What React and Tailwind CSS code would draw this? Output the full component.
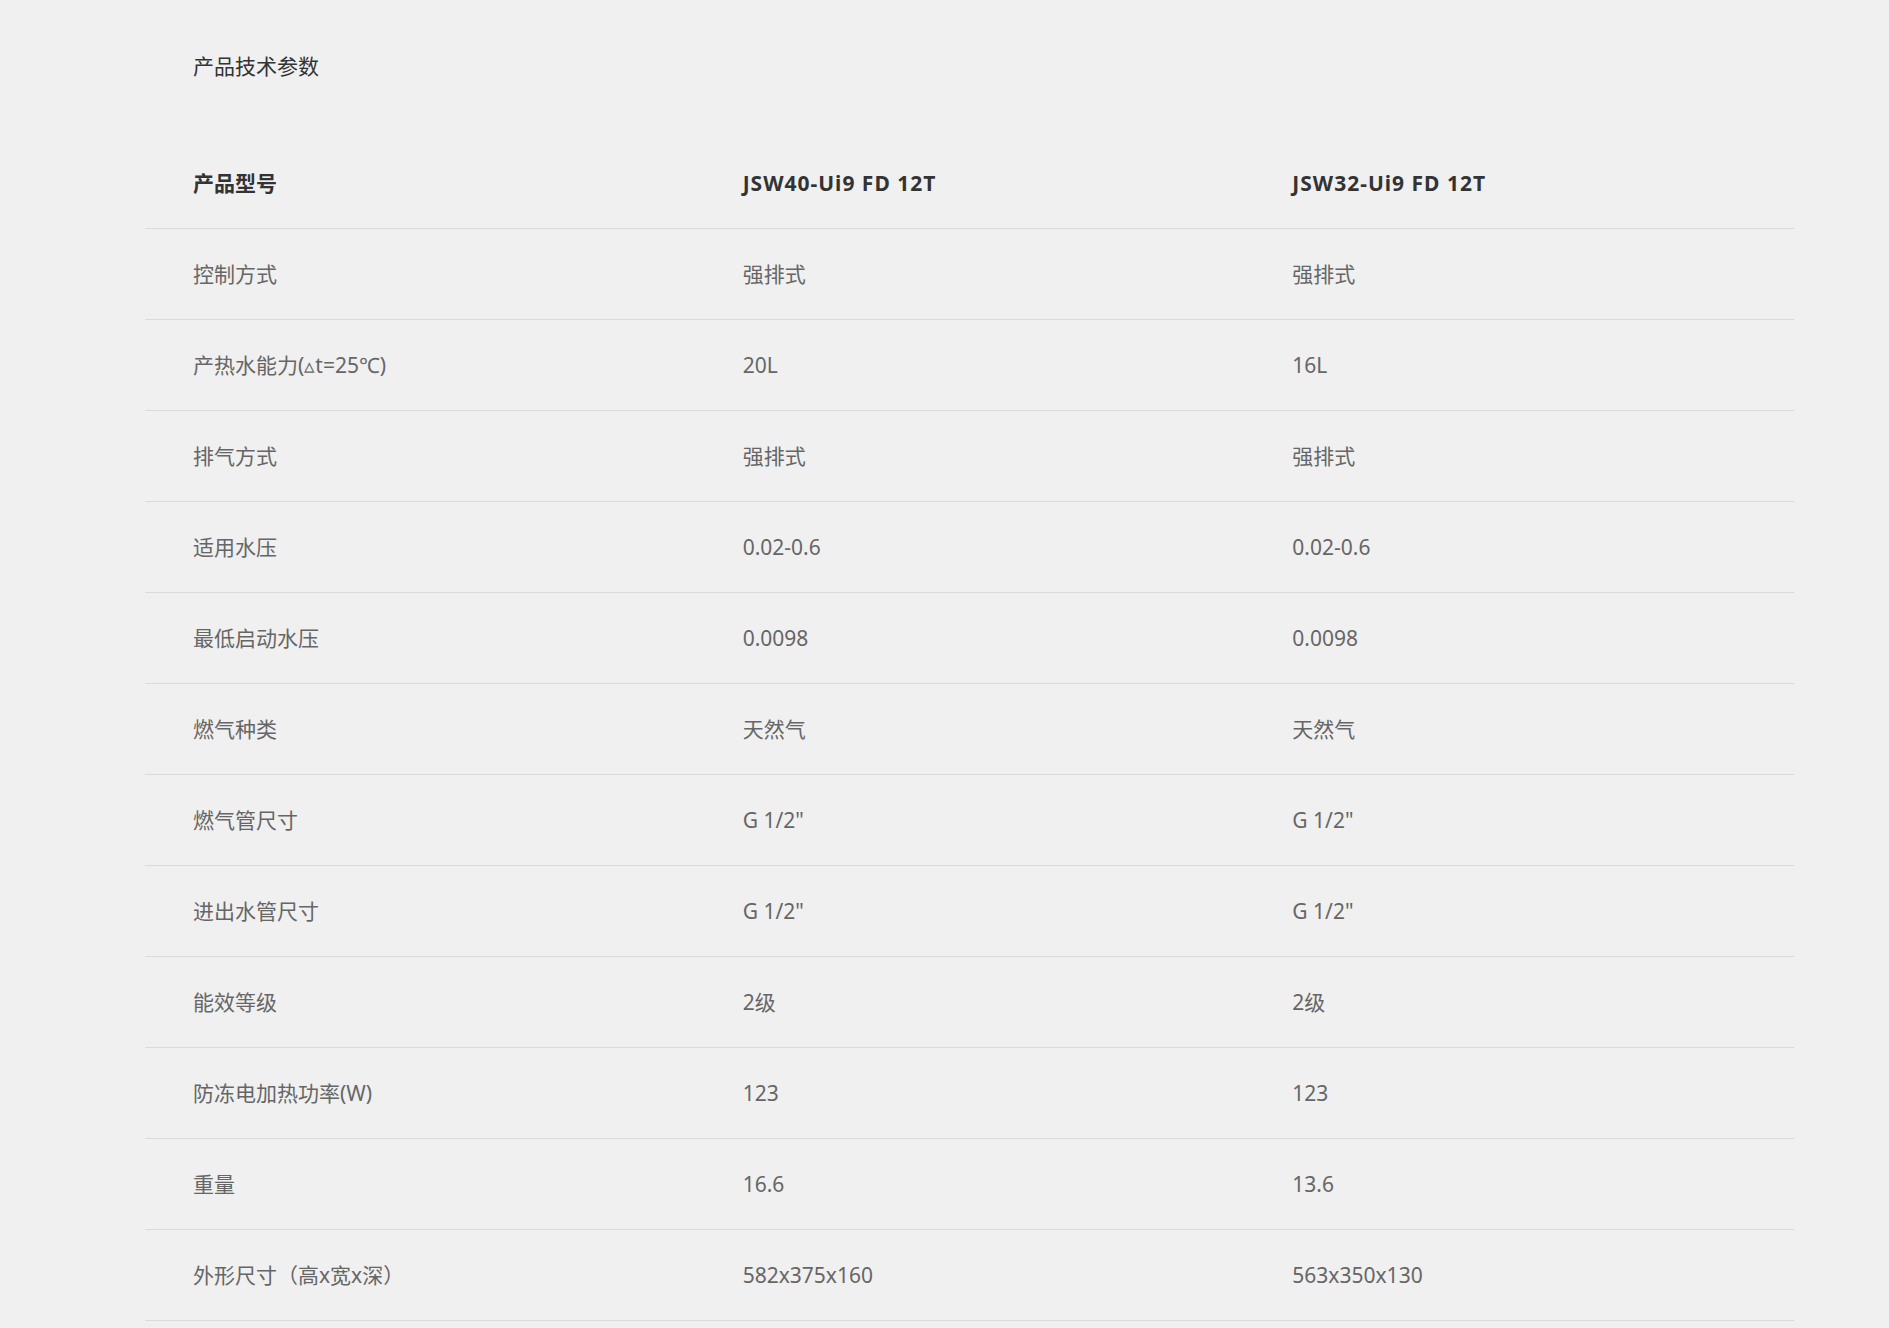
import React from "react";

const rows = [
  ["控制方式", "强排式", "强排式"],
  ["产热水能力(▵t=25℃)", "20L", "16L"],
  ["排气方式", "强排式", "强排式"],
  ["适用水压", "0.02-0.6", "0.02-0.6"],
  ["最低启动水压", "0.0098", "0.0098"],
  ["燃气种类", "天然气", "天然气"],
  ["燃气管尺寸", 'G 1/2"', 'G 1/2"'],
  ["进出水管尺寸", 'G 1/2"', 'G 1/2"'],
  ["能效等级", "2级", "2级"],
  ["防冻电加热功率(W)", "123", "123"],
  ["重量", "16.6", "13.6"],
  ["外形尺寸（高x宽x深）", "582x375x160", "563x350x130"],
];

const font = { fontFamily: '"Noto Sans", "Noto Sans CJK SC", sans-serif' };

export default function App() {
  return (
    <div className="min-h-screen w-full bg-[#f0f0f0]" style={font}>
      <div className="pl-[193px] pt-[52px] text-[21px] leading-[28px] text-[#333]">产品技术参数</div>

      <div className="ml-[145px] mr-[95px] mt-[58px]">
        {/* header */}
        <div className="grid grid-cols-3 h-[91px] items-center border-b border-[#dadada] text-[21px] font-bold text-[#333]">
          <div className="pl-[48px] pt-[2px]">产品型号</div>
          <div className="pl-[48px] pt-[2px] tracking-[1px]">JSW40-Ui9 FD 12T</div>
          <div className="pl-[48px] pt-[2px] tracking-[1px]">JSW32-Ui9 FD 12T</div>
        </div>

        {rows.map((r, i) => (
          <div
            key={i}
            className="grid grid-cols-3 h-[91px] items-center border-b border-[#dadada] text-[21px] text-[#666]"
          >
            <div className="pl-[48px] pt-[1px]">{r[0]}</div>
            <div className="pl-[48px] pt-[1px]">{r[1]}</div>
            <div className="pl-[48px] pt-[1px]">{r[2]}</div>
          </div>
        ))}
      </div>
    </div>
  );
}
